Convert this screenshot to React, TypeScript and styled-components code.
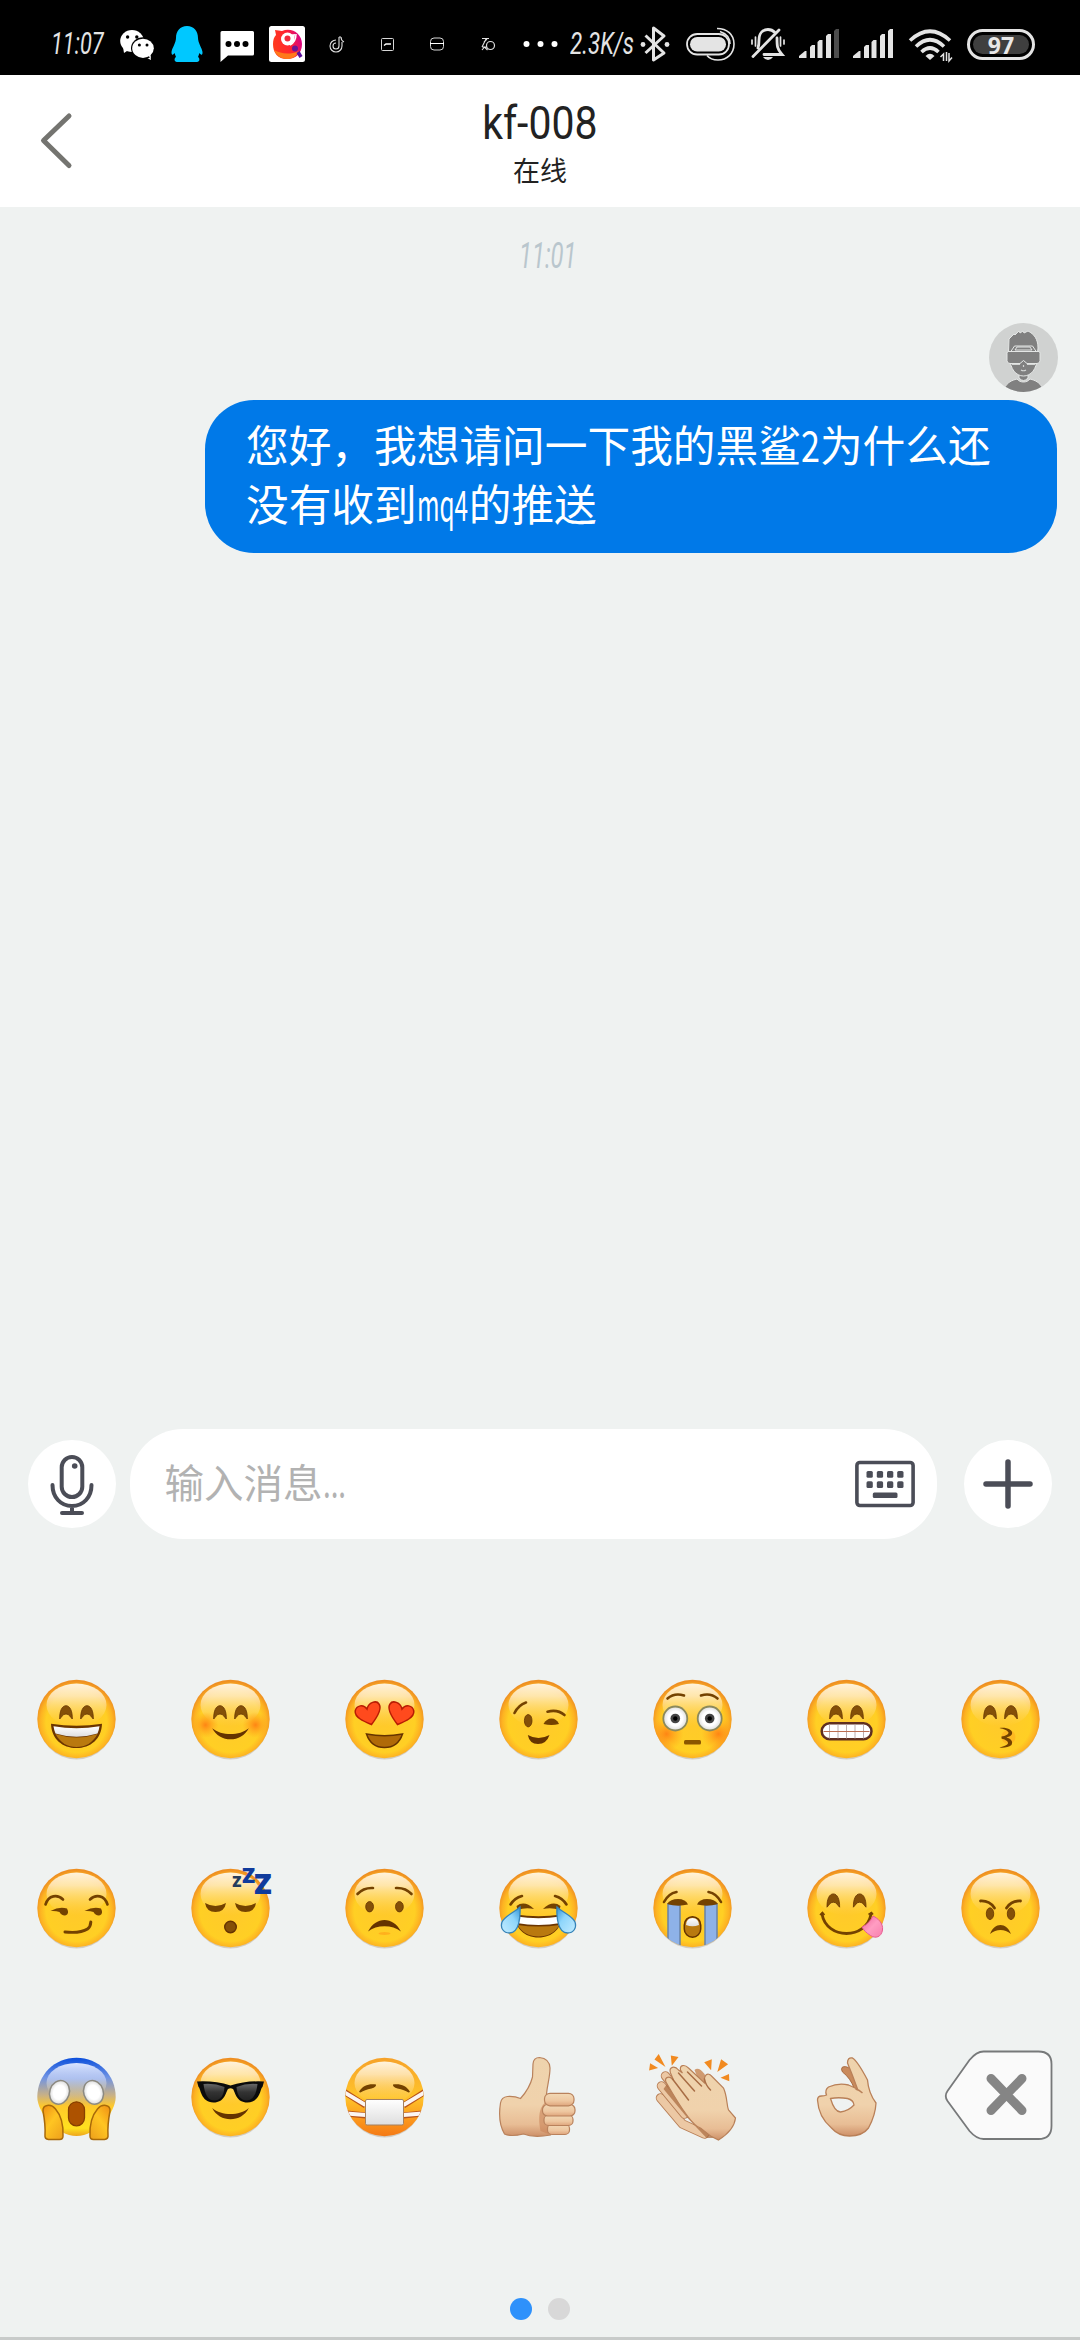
import React from 'react';
import styled, { createGlobalStyle } from 'styled-components';

const GlobalStyle = createGlobalStyle`
  * {
    box-sizing: border-box;
  }

  body {
    margin: 0;
    background: #eff2f1;
    font-family: 'Noto Sans CJK SC', sans-serif;
  }

  svg {
    display: block;
    flex-shrink: 0;
  }
`;

const Screen = styled.div`
  width: 1080px;
  height: 2340px;
  display: flex;
  flex-direction: column;
  background: #eff2f1;
  border-bottom: 3px solid #c8cbca;
  overflow: hidden;
`;

const StatusBar = styled.div`
  height: 75px;
  flex-shrink: 0;
  display: flex;
  align-items: center;
  background: #000;
  color: #e4e4e4;
`;

const StatusText = styled.span<{ $width: number; $scale: number; $indent: number }>`
  width: ${({ $width }) => $width}px;
  height: 75px;
  padding-top: 9px;
  padding-left: ${({ $indent }) => $indent}px;
  flex-shrink: 0;
  white-space: nowrap;
  font: italic 400 32px/68px Roboto, sans-serif;

  span {
    display: inline-block;
    transform: scaleX(${({ $scale }) => $scale});
    transform-origin: left center;
  }
`;

const Battery = styled.div`
  width: 68px;
  height: 31px;
  margin-top: 13px;
  margin-left: 14px;
  padding: 3px;
  border: 3px solid #e4e4e4;
  border-radius: 16px;
`;

const BatteryLevel = styled.div`
  height: 19px;
  border-radius: 10px;
  background: #3f3f3f;
  color: #e8e8e8;
  text-align: center;
  font: 700 23px/20px 'Open Sans', sans-serif;
`;

const Header = styled.header`
  height: 132px;
  flex-shrink: 0;
  display: grid;
  grid-template-columns: 110px 1fr 110px;
  background: #fff;
`;

const TitleBlock = styled.div`
  display: flex;
  flex-direction: column;
  align-items: center;
  color: #222;
`;

const Title = styled.h1`
  margin: 20px 0 0;
  font: 400 46px/56px Roboto, sans-serif;
  transform: scaleX(0.89);
`;

const Subtitle = styled.div`
  margin-top: 3px;
  font-size: 27px;
  line-height: 32px;
`;

const Conversation = styled.main`
  height: 1222px;
  flex-shrink: 0;
  padding: 28px 22px 0 205px;
  display: flex;
  flex-direction: column;
  align-items: flex-end;
`;

const Timestamp = styled.div`
  width: 60px;
  margin-right: 479px;
  color: #b9c6cd;
  font: italic 400 36px/42px Roboto, sans-serif;
  transform: scaleX(0.66);
  transform-origin: left center;
`;

const AvatarIcon = styled.svg`
  margin-top: 46px;
`;

const Bubble = styled.div`
  width: 852px;
  height: 153px;
  margin-top: 8px;
  margin-right: 1px;
  padding: 14px 40px 0 41px;
  border-radius: 49px;
  background: #0079e8;
  color: #fff;
  font-size: 42.7px;
  line-height: 59px;
  white-space: nowrap;
`;

const Narrow = styled.span<{ $width: number; $scale: number }>`
  display: inline-block;
  width: ${({ $width }) => $width}px;
  transform: scaleX(${({ $scale }) => $scale});
  transform-origin: left center;
`;

const Composer = styled.div`
  height: 110px;
  flex-shrink: 0;
  display: flex;
  align-items: center;
  padding: 0 28px;
  justify-content: space-between;
`;

const RoundButton = styled.button`
  width: 88px;
  height: 88px;
  padding: 0;
  border: none;
  border-radius: 50%;
  background: #fff;
`;

const InputBox = styled.div`
  width: 807px;
  height: 110px;
  margin-right: 14px;
  padding: 0 22px 0 35px;
  display: flex;
  align-items: center;
  justify-content: space-between;
  border-radius: 53px;
  background: #fff;
`;

const Placeholder = styled.span`
  margin-bottom: 7px;
  color: #b2b2b2;
  font-size: 39.5px;
  line-height: 60px;
`;

const EmojiGrid = styled.div`
  margin-top: 85px;
  display: grid;
  flex-shrink: 0;
  grid-template-columns: repeat(7, 154px);
  grid-auto-rows: 189px;
  place-items: center;
`;

const Pager = styled.div`
  margin-top: 107px;
  display: flex;
  justify-content: center;
  gap: 16px;
`;

const PageDot = styled.span<{ $active?: boolean }>`
  width: 22px;
  height: 22px;
  border-radius: 50%;
  background: ${({ $active }) => ($active ? '#2e91fb' : '#d8d8d8')};
`;

// Status icons share one coordinate system, so each slot only says where it starts and how wide it is
const Slot: React.FC<{ x: number; w: number; children?: React.ReactNode }> = ({ x, w, children }) => (
  <svg width={w} height="75" viewBox={`${x} 0 ${w} 75`} fill="none">
    {children}
  </svg>
);

const Signal: React.FC<{ x: number; weak?: boolean }> = ({ x, weak }) => (
  <g fill="#e4e4e4">
    <path d={`M${x} 58v-2l6-5h1.5v7z`} />
    <path d={`M${x + 11} 58V47l2-2h3v13z`} />
    <path d={`M${x + 18.5} 58V42l2-2h3v18z`} />
    <path d={`M${x + 27} 58V36l2-2h3v24z`} />
    <path d={`M${x + 35} 58V31l2-2h3v29z`} fill={weak ? '#4d4d4d' : '#e4e4e4'} />
  </g>
);

const StatusIcons: React.FC = () => (
  <StatusBar>
    <StatusText $width={112} $indent={51} $scale={0.68}>
      <span>11:07</span>
    </StatusText>
    <Slot x={112} w={51}>
      <path d="M123 47l1 6 6-4zM150 54l1 6-6-3z" fill="#fff" />
      <ellipse cx="132" cy="41" rx="11.8" ry="11" fill="#fff" />
      <ellipse cx="143" cy="48.3" rx="12" ry="11" fill="#000" />
      <ellipse cx="143" cy="48.3" rx="10.8" ry="9.6" fill="#fff" />
      <path d="M147 55l4 3-1-6z" fill="#fff" />
      <g fill="#000">
        <circle cx="127.6" cy="37" r="1.7" />
        <circle cx="136.8" cy="37" r="1.7" />
        <circle cx="139.4" cy="45" r="1.5" />
        <circle cx="147" cy="45" r="1.5" />
      </g>
    </Slot>
    <Slot x={163} w={48}>
      <path
        d="M187 26c7 0 11 5 11 12 0 5 4 10 4.500 14 .2 3-1 4-3 1l-1.500 4c2 1 2 5-1 5h-20c-3 0-3-4-1-5l-1.500-4c-2 3-3 2-3-1 .5-4 4.500-9 4.500-14 0-7 4-12 11-12z"
        fill="#00c8ff"
      />
    </Slot>
    <Slot x={211} w={50}>
      <path d="M222 31h30.500q1.500 0 1.500 1.500v21.500q0 1.500-1.500 1.500H228l-7.500 6.500V32.500q0-1.500 1.500-1.500z" fill="#fff" />
      <g fill="#000">
        <circle cx="228.500" cy="44" r="3" />
        <circle cx="237" cy="44" r="3" />
        <circle cx="245.500" cy="44" r="3" />
      </g>
    </Slot>
    <Slot x={261} w={60}>
      <defs>
        <linearGradient id="bird" x1="0" y1="0.600" x2="1" y2="0.300">
          <stop offset="0" stopColor="#ff3b1c" />
          <stop offset="0.550" stopColor="#ff2430" />
          <stop offset="1" stopColor="#d4008c" />
        </linearGradient>
      </defs>
      <rect x="269" y="26" width="36" height="36" rx="2.500" fill="#fff" />
      <path d="M275 30l7 1c10-4 20 3 20 13 0 9-6 15-15 15s-14-6-14-15c0-4 1-7 3-9z" fill="url(#bird)" />
      <path d="M274 50c7 4 16 5 25 1-3 6-7 8-12 8-6 0-11-4-13-9z" fill="#ff7a1a" />
      <circle cx="287.500" cy="39" r="6.500" fill="#fff" />
      <path d="M287 35l8-1-1 8z" fill="#fff" />
      <circle cx="287.500" cy="38.500" r="3" fill="#f22a3c" />
      <path d="M296 34c0 6-2 9-6 11" stroke="#fff" strokeWidth="1.500" />
      <circle cx="295" cy="48.500" r="3" fill="#6b1596" />
      <path d="M298 52l3 5" stroke="#5a0f9c" strokeWidth="3.500" />
    </Slot>
    <Slot x={321} w={48}>
      <path
        d="M339 37v9a3 3 0 1 1-3-3M341 37c0 3 1 4 3 5M336 40a6 6 0 1 0 6 6v-4M339 37h2"
        stroke="#e0e0e0"
        strokeWidth="1.100"
      />
    </Slot>
    <Slot x={369} w={48}>
      <rect x="381.500" y="38.500" width="12" height="12" rx="1" stroke="#d8d8d8" />
      <path d="M384 45.500l2-1.500h5" stroke="#fff" strokeWidth="1.500" />
    </Slot>
    <Slot x={417} w={50}>
      <rect x="430.500" y="38" width="13" height="12" rx="3.500" stroke="#d8d8d8" />
      <path d="M430 43.500h14" stroke="#fff" />
    </Slot>
    <Slot x={467} w={48}>
      <path d="M482 38.500h7M486 39l-4 8M484 42l3-3M482 50l2.500-3 3 3M482 47h5" stroke="#e0e0e0" strokeWidth="1.100" />
      <circle cx="490.500" cy="45.500" r="4" stroke="#e0e0e0" strokeWidth="1.200" />
    </Slot>
    <Slot x={515} w={53}>
      <circle cx="526.500" cy="44" r="3" fill="#fff" />
      <circle cx="540.500" cy="44" r="3" fill="#fff" />
      <circle cx="554.500" cy="44" r="3" fill="#fff" />
    </Slot>
    <StatusText $width={68} $indent={2} $scale={0.7}>
      <span>2.3K/s</span>
    </StatusText>
    <Slot x={636} w={42}>
      <path d="M645.500 35.500L664 53l-10.500 7V28L664 36 645.500 53" stroke="#e4e4e4" strokeWidth="3" strokeLinejoin="round" />
      <circle cx="643" cy="44.500" r="2.400" fill="#e4e4e4" />
      <circle cx="667" cy="44.500" r="2.400" fill="#e4e4e4" />
    </Slot>
    <Slot x={678} w={65}>
      <rect x="687" y="34" width="42" height="20.500" rx="10.200" stroke="#e4e4e4" strokeWidth="1.800" />
      <rect x="690" y="37" width="36" height="14.500" rx="7.200" fill="#e4e4e4" />
      <path d="M717 28.500c10 0 17 6 17 15.500s-7 16-16 16c-5 0-9-2-11-4.500M720 31.500c6 2 10 6 10 12.500" stroke="#e4e4e4" strokeWidth="1.600" />
    </Slot>
    <Slot x={743} w={49}>
      <g stroke="#e4e4e4" strokeWidth="2.800" strokeLinecap="round">
        <path d="M758 48c1-3 1-5 1-8 0-7 4-10.500 9-10.500 3 0 5 1 7 3M777 38c0 8 0 11 5 16.500h-18" />
        <path d="M753 56.500L779 30" />
        <path d="M755.500 37v9M752 40v4M780.500 37v9M784 40v4" strokeWidth="1.700" />
      </g>
      <path d="M763 57h10q-2 3-5 3t-5-3z" fill="#e4e4e4" />
    </Slot>
    <Slot x={792} w={54}>
      <Signal x={799} weak />
    </Slot>
    <Slot x={846} w={54}>
      <Signal x={853} />
    </Slot>
    <Slot x={900} w={53}>
      <g stroke="#e4e4e4" strokeWidth="3.600">
        <path d="M910 40.500Q930 22 950 40.500" />
        <path d="M916 46.500Q930 33 944 46.500" />
        <path d="M921.500 52Q930 44 938.500 52" />
      </g>
      <path d="M925.500 56q4.500-4.500 9 0L930 60z" fill="#e4e4e4" />
      <path d="M943.500 61v-7l-3 3M946.500 52v9M949 53v8l3-3.500" stroke="#e4e4e4" strokeWidth="1.500" />
    </Slot>
    <Battery>
      <BatteryLevel>97</BatteryLevel>
    </Battery>
  </StatusBar>
);

const Avatar: React.FC = () => (
  <AvatarIcon width="69" height="69" viewBox="989 323 69 69">
    <clipPath id="avatarClip">
      <circle cx="1023.500" cy="357.500" r="34.500" />
    </clipPath>
    <g clipPath="url(#avatarClip)">
      <rect x="989" y="323" width="69" height="69" fill="#d0d2d1" />
      <g fill="#808080" stroke="#e4e6e5" strokeWidth="1">
        <path d="M1003 394c1-8 5-13 14-15 3 4 10 4 13 0 9 2 13 7 14 15z" />
        <path d="M1019 372v6q4.500 5 9 0v-6z" />
        <path d="M1010 358c0 11 6 18 13.500 18s13.500-7 13.500-18z" />
        <path d="M1008.500 352l.5-13 3-3 2-2 1 1 4-4 1 2 3-2 1 2 4-2c6 3 10 8 10 17l-.5 5z" />
        <path d="M1010.500 352l4-6h18l4 6" />
        <path d="M1015 350l2-3h13l2 3z" />
        <path d="M1008 351.500h31q1 0 1 2v7q0 3-3 3h-10l-3.500-3-3.500 3h-10q-3 0-3-3v-7q0-2 1-2z" />
      </g>
      <path d="M1012 364.500h8M1027 364.500h8M1021 370q2.500 1.500 5 0M1023.500 365v2" stroke="#d4d6d5" strokeWidth="1.200" fill="none" />
    </g>
  </AvatarIcon>
);

const BROWN = '#845008';
const DARK = '#653300';

const Face: React.FC<{ fill?: string; children?: React.ReactNode }> = ({ fill = 'url(#face)', children }) => (
  <>
    <ellipse cx="0" cy="1.200" rx="38.500" ry="39.300" fill="#9a8a70" opacity="0.350" />
    <circle r="39.200" fill={fill} />
    <ellipse cx="0" cy="-14" rx="30" ry="21.500" fill="url(#gloss)" />
    {children}
  </>
);

const HappyEyes: React.FC<{ gap?: number; dy?: number }> = ({ gap = 10.5, dy = 0 }) => (
  <>
    {[-gap, gap].map((x) => (
      <path
        key={x}
        transform={`translate(${x} ${dy})`}
        d="M-6.300 0C-6.500-8-4-13.300 0-13.300S6.500-8 6.300 0C4.500-1.500 3.500-5 0-5S-4.500-1.500-6.300 0z"
        fill={BROWN}
        stroke={DARK}
        strokeWidth="0.800"
      />
    ))}
  </>
);

// Draws its children twice, the second time mirrored across the face
const Both: React.FC<{ children: React.ReactNode }> = ({ children }) => (
  <>
    <g>{children}</g>
    <g transform="scale(-1 1)">{children}</g>
  </>
);

const Line: React.FC<{ d: string; w?: number }> = ({ d, w = 2.6 }) => (
  <path d={d} fill="none" stroke="#744200" strokeWidth={w} strokeLinecap="round" />
);

const emojis: { name: string; art: React.ReactNode }[] = [
  {
    name: 'smile',
    art: (
      <Face>
        <HappyEyes />
        <path d="M-25.500 4.700Q0 9 25.500 4.700C25 20 14 29 0 29S-25 20-25.500 4.700z" fill="#6b3500" />
        <path d="M-21 15Q0 22 21 15C16 24 9 28 0 28S-16 24-21 15z" fill="#b9790f" />
        <path d="M-23 7.200Q0 11.500 23 7.200 22.500 11 21 14.500 0 21-21 14.500-22.500 11-23 7.200z" fill="url(#teeth)" />
      </Face>
    ),
  },
  {
    name: 'blush',
    art: (
      <Face>
        <Both>
          <circle cx="-25" cy="6" r="13" fill="url(#cheek)" />
        </Both>
        <HappyEyes />
        <path d="M-18.300 9.200C-9 17 9 17 18.300 9.200 11 24-11 24-18.300 9.200z" fill={DARK} />
      </Face>
    ),
  },
  {
    name: 'heart eyes',
    art: (
      <Face>
        <Both>
          <path
            d="M-13 5.500C-19 3-30-1-29.300-8-28-14-21-15-17.500-10-16-17-8-19-5.500-15-2-10-8-1-13 5.500z"
            fill="#ff4a1d"
            stroke="#b81c04"
            strokeWidth="1.500"
          />
        </Both>
        <path d="M-18 15Q0 18.500 18 15C15 24 9 28.500 0 28.500S-15 24-18 15z" fill="#b06a08" stroke={DARK} strokeWidth="1.500" />
      </Face>
    ),
  },
  {
    name: 'wink',
    art: (
      <Face>
        <Line d="M-24-6Q-20-14-12.500-16.500" />
        <ellipse cx="-10.300" cy="1.700" rx="3.800" ry="6.200" fill={BROWN} stroke={DARK} strokeWidth="0.800" />
        <Line d="M9-7.300Q19-10 26-4" />
        <path d="M5 5Q8-.5 13-.5T20.500 5Q13 7 5 5z" fill="#744200" />
        <path d="M-10.700 16Q0 22 11 16 8 25-.5 25T-10.700 16z" fill={DARK} />
      </Face>
    ),
  },
  {
    name: 'flushed',
    art: (
      <Face>
        <Both>
          <circle cx="-26" cy="15" r="17" fill="url(#cheek)" clipPath="url(#faceClip)" />
          <Line d="M-25-20.500Q-18-26.500-8.500-23.500" />
          <circle cx="-17.200" cy="-0.500" r="12" fill="url(#eyeball)" stroke="#8b895c" strokeWidth="1.800" />
          <circle cx="-17.200" cy="-0.500" r="4.800" fill="#444" />
          <circle cx="-17.200" cy="-0.500" r="2.200" fill="#000" />
        </Both>
        <rect x="-8.500" y="21" width="17" height="4.500" rx="1.500" fill="#8b5500" />
      </Face>
    ),
  },
  {
    name: 'grimace',
    art: (
      <Face>
        <HappyEyes />
        <rect x="-24.800" y="4.300" width="49.800" height="16" rx="8" fill="#fff" stroke="#5f2f20" strokeWidth="2.500" />
        <path d="M-17 5.500v14M-8.500 5.500v14M0 5.500v14M8.500 5.500v14M17 5.500v14" stroke="#b3a5a5" strokeWidth="0.900" />
        <path d="M-23 12.500h46" stroke="#bd7052" strokeWidth="1.200" />
      </Face>
    ),
  },
  {
    name: 'kissing',
    art: (
      <Face>
        <HappyEyes />
        <circle cx="8" cy="18" r="7" fill="#ff9a1c" opacity="0.400" />
        <path
          d="M-1 9C6 8 13 11 11.500 15 10.500 17.500 7 18 6 18.500 10 19.500 13 22 11 26 8 28.500 3 29-1 28.500 4 27 7 26 7.500 24.500 8 22 4 20.500 1 19.500L1 17.500C5 17 8 15.500 8 13.500 7 11 3 10-1 9z"
          fill="#744200"
        />
      </Face>
    ),
  },
  {
    name: 'smirk',
    art: (
      <Face>
        <Both>
          <Line d="M-31-3.500C-28-13-19-14-13.500-8.500" />
        </Both>
        {[0, 34].map((x) => (
          <path
            key={x}
            transform={`translate(${x} 0)`}
            d="M-26 3Q-17-2-9.500 .5-7 5.500-10.500 7.300-15 8-17 4-21 2.500-26 3z"
            fill="#744200"
          />
        ))}
        <Line w={3} d="M-11.500 24Q4 25.500 11 21 14 19 14.300 14" />
      </Face>
    ),
  },
  {
    name: 'sleeping',
    art: (
      <Face>
        <Both>
          <path d="M-25.500-5Q-15 1-4.500-5-6 4-15 4T-25.500-5z" fill="#744200" />
        </Both>
        <circle cx="0" cy="19" r="5.800" fill={BROWN} stroke={DARK} strokeWidth="1.400" />
        <g fill="#103b9c" fontFamily="Open Sans, sans-serif" fontWeight="800">
          <text x="1.800" y="-21" fontSize="15" fill="#253c5c">
            Z
          </text>
          <text x="11.500" y="-25.500" fontSize="21.500">
            Z
          </text>
          <text x="23.500" y="-14" fontSize="29">
            Z
          </text>
        </g>
      </Face>
    ),
  },
  {
    name: 'worried',
    art: (
      <Face>
        <Both>
          <Line d="M-27-14Q-21-20.500-11.500-20" />
          <ellipse cx="-14.900" cy="-1.300" rx="3.900" ry="5.200" fill={BROWN} stroke={DARK} strokeWidth="0.800" />
        </Both>
        <path d="M-16.500 23.500C-9 8 9 8 16.500 23.500 8 16.500-8 16.500-16.500 23.500z" fill={DARK} />
        <ellipse cx="0" cy="25.500" rx="6" ry="1.500" fill="#ffb01d" />
      </Face>
    ),
  },
  {
    name: 'joy',
    art: (
      <Face>
        <Both>
          <Line d="M-28-3.500Q-24-10-16.500-12" />
          <path d="M-22-2Q-14-8-4.500 1-13-1-21 2z" fill="#744200" />
        </Both>
        <path d="M-23 6.500Q0 10 23 6.500C24 20 14 29.500 0 29.500S-24 20-23 6.500z" fill="#6b3500" />
        <path d="M-21 17Q0 20 21 17C16 25 9 28.500 0 28.500S-16 25-21 17z" fill="#b9790f" />
        <path d="M-22 8.500Q0 12 22 8.500V15Q0 19-22 15z" fill="#fff" />
        <Both>
          <path
            d="M-18.500-1C-18 8-19 25-29 25-35 25-38.500 20-36.500 14-34 8-25 5-18.500-1z"
            fill="url(#tear)"
            stroke="#3583b8"
            strokeWidth="1.300"
          />
        </Both>
      </Face>
    ),
  },
  {
    name: 'sob',
    art: (
      <Face>
        <Both>
          <Line d="M-28.500-6Q-24-14.500-16-16" />
          <rect x="-24.500" y="-4" width="12" height="45" fill="#8eb2e8" stroke="#6882a5" strokeWidth="1.500" clipPath="url(#faceClip)" />
          <path d="M-25.500-4Q-22-9-14.500-9T-4.500-3.500Q-15-1-25.500-4z" fill="#744200" />
        </Both>
        <rect x="-8.200" y="8.700" width="16.400" height="20.500" rx="8.200" fill="#b9790f" stroke={DARK} strokeWidth="1.500" />
        <path d="M-6.500 17Q-6 10 0 10T6.500 17Q0 19.500-6.500 17z" fill="url(#teeth)" />
      </Face>
    ),
  },
  {
    name: 'yum',
    art: (
      <Face>
        <HappyEyes gap={13.2} dy={-0.8} />
        <Line w={2.8} d="M-24.500 6C-20 32 20 32 24.500 6" />
        <path d="M-26.500 7l2.500-2.500 2 2.500M22 6.500l3-2 1.500 2" stroke="#744200" strokeWidth="1.600" fill="none" />
        <path
          d="M26.500 8C31 10 37 15 36 22 35 29 29 31 24 27.500 20 25 17 22 15.500 19 20 17 24 13 26.500 8z"
          fill="url(#tongue)"
          stroke="#e85d91"
          strokeWidth="1"
        />
      </Face>
    ),
  },
  {
    name: 'angry',
    art: (
      <Face>
        <Both>
          <Line w={2.8} d="M-20-7Q-11-7.500-6 0" />
          <ellipse cx="-10.500" cy="5.700" rx="3.700" ry="5.900" fill={BROWN} stroke={DARK} strokeWidth="0.800" />
        </Both>
        <path d="M-10.500 26C-6 14 6 14 10.500 26 4 20.500-4 20.500-10.500 26z" fill="#744200" />
      </Face>
    ),
  },
  {
    name: 'scream',
    art: (
      <>
        <path d="M0-39.200C22-39.200 39.200-22 39.200 0 39.200 15 20 39 0 39S-39.200 15-39.200 0C-39.200-22-22-39.200 0-39.200z" fill="url(#scream)" />
        <ellipse cx="0" cy="-14" rx="30" ry="20" fill="url(#blueGloss)" />
        <Both>
          <ellipse
            cx="-17"
            cy="-4.700"
            rx="9.800"
            ry="12"
            transform="rotate(18 -17 -4.700)"
            fill="url(#eyeball)"
            stroke="#8b8980"
            strokeWidth="1.500"
          />
          <path
            d="M-33.500 14C-34 8-26 6-21 12-15 19-13 28-13.500 39Q-13.500 42.500-17 42.500H-28Q-32 42-31.500 38C-31 30-32 22-33.500 14z"
            fill="url(#hand)"
            stroke="#a8690a"
            strokeWidth="1.500"
          />
        </Both>
        <rect x="-8" y="4.800" width="16" height="24" rx="8" fill="#ad5200" stroke="#874000" strokeWidth="1.300" />
      </>
    ),
  },
  {
    name: 'cool',
    art: (
      <Face>
        <path
          d="M-33.500-15.500Q-16-16.500 0-11.500 16-16.500 33.500-15.500L32-10C30-10 30 5.500 17 5.500 6 5.500 5-4 2.500-8Q0-9.500-2.500-8C-5-4-6 5.500-17 5.500-30 5.500-30-10-32-10z"
          fill="#0b0b0b"
        />
        <Both>
          <path d="M-27-13Q-16-14-6-10 -7 3-16 3.500T-27-13z" fill="url(#lens)" />
        </Both>
        <path d="M-18.300 11C-9 19 9 19 18.300 11 11 26-11 26-18.300 11z" fill={DARK} />
      </Face>
    ),
  },
  {
    name: 'mask',
    art: (
      <Face fill="url(#sickFace)">
        <Both>
          <path d="M-25.500-5C-22-12-15-13.500-8.500-12.500Q-8-10-13-8.500C-18-8-21-6-24-4.500z" fill="#744200" />
          <g clipPath="url(#faceClip)" fill="none">
            <path d="M-40-5L-19 8.500M-38 16.500L-19 18.500" stroke="#b9541a" strokeWidth="6" />
            <path d="M-40-4.500L-19 8M-38 16.500L-19 18" stroke="#fbf5f2" strokeWidth="3.800" />
          </g>
        </Both>
        <rect x="-19" y="2.500" width="38" height="25.500" rx="1.500" fill="url(#teeth)" stroke="#a5805f" strokeWidth="1" />
      </Face>
    ),
  },
  {
    name: 'thumbs up',
    art: (
      <g stroke="#b9825c" strokeWidth="1.200">
        <path
          d="M-38 6Q-37 0-31-.5-24-1-18 1.500C-13-4-8-12-6-20L-5.500-33Q-5-39.500 1-39.500 11-38.500 11.500-29C11.500-20 9-13 8-3L12 4V38Q-5 41-15 37-28 40-34 37-41 25-38 6z"
          fill="url(#skin)"
        />
        <path d="M6 6Q-2 14 2 34L10 37V2z" fill="#c98458" stroke="none" opacity="0.600" />
        <rect x="9" y="27" width="22" height="10.500" rx="4.500" fill="url(#finger)" />
        <rect x="5.500" y="18" width="29" height="10.500" rx="4.500" fill="url(#finger)" />
        <rect x="4" y="7.500" width="32.500" height="11.500" rx="5" fill="url(#finger)" />
        <rect x="6" y="-3.700" width="29.500" height="12.500" rx="5.500" fill="url(#finger)" />
      </g>
    ),
  },
  {
    name: 'clap',
    art: (
      <>
        <path
          d="M-38-37.500l4.200-5.500 6.800 13zM-21.700-41.500l7.700 1.500-6.700 8.700zM-42.400-33.700l8 4.700-9 2.500zM11.700-34.700l7.600-3-.7 11zM28.600-37.700l7 5-10.800 7.700zM28-19.300l8.500-3.700.3 7.300z"
          fill="#f18a20"
        />
        {['M-32 1L-10 27 12 37', 'M-31-11L-8 17', 'M-27-21L0 12'].map((d) => (
          <g key={d} fill="none" strokeLinecap="round" strokeLinejoin="round">
            <path d={d} stroke="#b98058" strokeWidth="9.500" />
            <path d={d} stroke="#ecc8a4" strokeWidth="7.500" />
          </g>
        ))}
        <path d="M-29-8L-5 21 14 41 22 41 0 8-24-15z" fill="#a8683c" opacity="0.700" />
        <path d="M2-27Q6-31 12-23L18-10 8-12z" fill="#cf9a70" />
        <path
          d="M-26-14C-29-19-24-22-20-18L-19-17-22-24C-24-30-18-32-14-27L-10-24-12-27C-13-32-8-33-4-29L12-14C11-22 15-26 20-20L31-9C35 0 34 8 36 13L43 21C42 30 34 38 26 43L18 39 8 31C2 30-10 14-26-14z"
          fill="url(#skin)"
          stroke="#b98058"
          strokeWidth="1.200"
        />
        <path d="M-20-18L-4 3M-14-24L2-6M-5-25L9-11M12-18Q13-12 18-7" stroke="#a86d45" strokeWidth="1.500" fill="none" strokeLinecap="round" />
      </>
    ),
  },
  {
    name: 'ok hand',
    art: (
      <>
        <path d="M-4-30Q2-32 7-24L13-8 8-8Q4-19-4-25-6-28-4-30z" fill="#c98a5c" stroke="#a96c42" />
        <path
          fillRule="evenodd"
          d="M-29 3Q-29-1-25-1-22-1-20-2-22-7-18-10-8-14.500 2-12L11-8Q6-22 1-34 1-40 6-39 11-36 21-17 22-4 29.500 6 29 18 22 31 16 39 3 39-8 39-15 31-28 20-29 3zM-16 1.500Q-12 15-6 15 2 14 7.500 8 7 3 1 1.500-8 0-16 1.500z"
          fill="url(#skin)"
          stroke="#b98058"
          strokeWidth="1.300"
        />
        <path d="M9-8Q13-7 16-4" stroke="#b98058" strokeWidth="1.300" fill="none" />
      </>
    ),
  },
];

const GradientDefs: React.FC = () => (
  <svg width="0" height="0">
    <defs>
      <clipPath id="faceClip">
        <circle r="39.200" />
      </clipPath>
      <radialGradient id="face" gradientUnits="userSpaceOnUse" cx="0" cy="3" r="41">
        <stop offset="0" stopColor="#ffc92b" />
        <stop offset="0.740" stopColor="#ffcf24" />
        <stop offset="0.880" stopColor="#fdb322" />
        <stop offset="1" stopColor="#ee8f22" />
      </radialGradient>
      <linearGradient id="sickFace" x1="0" y1="0" x2="0" y2="1">
        <stop offset="0" stopColor="#f6a229" />
        <stop offset="0.500" stopColor="#ffc42a" />
        <stop offset="0.800" stopColor="#fb961c" />
        <stop offset="1" stopColor="#f47a16" />
      </linearGradient>
      <linearGradient id="gloss" x1="0" y1="0" x2="0" y2="1">
        <stop offset="0" stopColor="#fff3dc" />
        <stop offset="0.300" stopColor="#ffeac2" stopOpacity="0.850" />
        <stop offset="1" stopColor="#ffd35a" stopOpacity="0" />
      </linearGradient>
      <linearGradient id="blueGloss" x1="0" y1="0" x2="0" y2="1">
        <stop offset="0" stopColor="#dbe5ff" />
        <stop offset="0.400" stopColor="#bccbf2" stopOpacity="0.800" />
        <stop offset="1" stopColor="#ffd35a" stopOpacity="0" />
      </linearGradient>
      <radialGradient id="cheek">
        <stop offset="0" stopColor="#ff7d12" stopOpacity="0.900" />
        <stop offset="1" stopColor="#ff9a1c" stopOpacity="0" />
      </radialGradient>
      <linearGradient id="teeth" x1="0" y1="0" x2="0" y2="1">
        <stop offset="0" stopColor="#fff" />
        <stop offset="1" stopColor="#dedede" />
      </linearGradient>
      <radialGradient id="eyeball">
        <stop offset="0.600" stopColor="#fff" />
        <stop offset="1" stopColor="#dcdcdc" />
      </radialGradient>
      <linearGradient id="tear" x1="1" y1="0" x2="0" y2="1">
        <stop offset="0" stopColor="#2f92d6" />
        <stop offset="0.400" stopColor="#8fd6fb" />
        <stop offset="1" stopColor="#c3ecff" />
      </linearGradient>
      <linearGradient id="tongue" x1="0" y1="0" x2="1" y2="1">
        <stop offset="0" stopColor="#f0609a" />
        <stop offset="0.500" stopColor="#ff9dc2" />
        <stop offset="1" stopColor="#f77fae" />
      </linearGradient>
      <linearGradient id="scream" x1="0" y1="0" x2="0" y2="1">
        <stop offset="0" stopColor="#0b4fdc" />
        <stop offset="0.250" stopColor="#6f93e4" />
        <stop offset="0.480" stopColor="#c9b185" />
        <stop offset="0.620" stopColor="#ffc92a" />
        <stop offset="0.900" stopColor="#ffe11f" />
        <stop offset="1" stopColor="#eda51d" />
      </linearGradient>
      <linearGradient id="hand" x1="0" y1="0" x2="0.800" y2="1">
        <stop offset="0" stopColor="#ef8d14" />
        <stop offset="0.500" stopColor="#ffc522" />
        <stop offset="1" stopColor="#f0a51c" />
      </linearGradient>
      <linearGradient id="lens" x1="0" y1="0" x2="0" y2="1">
        <stop offset="0" stopColor="#686868" />
        <stop offset="0.500" stopColor="#333" />
        <stop offset="1" stopColor="#222" />
      </linearGradient>
      <linearGradient id="skin" x1="0" y1="0" x2="0" y2="1">
        <stop offset="0" stopColor="#eed3ad" />
        <stop offset="0.600" stopColor="#f0d2ac" />
        <stop offset="0.850" stopColor="#e8bd95" />
        <stop offset="1" stopColor="#cd9068" />
      </linearGradient>
      <linearGradient id="finger" x1="0" y1="0" x2="0" y2="1">
        <stop offset="0" stopColor="#f2d9b6" />
        <stop offset="0.600" stopColor="#eec7a0" />
        <stop offset="1" stopColor="#dfa57c" />
      </linearGradient>
    </defs>
  </svg>
);

const App: React.FC = () => (
  <>
    <GlobalStyle />
    <GradientDefs />
    <Screen>
      <StatusIcons />
      <Header>
        <svg width="110" height="132" viewBox="0 75 110 132" fill="none">
          <path d="M69 116L43.500 140.500 69 165.500" stroke="#747470" strokeWidth="5" strokeLinecap="round" strokeLinejoin="round" />
        </svg>
        <TitleBlock>
          <Title>kf-008</Title>
          <Subtitle>在线</Subtitle>
        </TitleBlock>
      </Header>

      <Conversation>
        <Timestamp>11:01</Timestamp>
        <Avatar />
        <Bubble>
          您好，我想请问一下我的黑鲨
          <Narrow $width={19} $scale={0.8}>2</Narrow>
          为什么还
          <br />
          没有收到
          <Narrow $width={52} $scale={0.57}>mq4</Narrow>
          的推送
        </Bubble>
      </Conversation>

      <Composer>
        <RoundButton aria-label="语音">
          <svg width="88" height="88" viewBox="28 1440 88 88" fill="none" stroke="#4b4d57" strokeWidth="4" strokeLinecap="round">
            <rect x="61.700" y="1457" width="20.600" height="40" rx="10.300" />
            <path d="M52.500 1485c0 12 8 21 19.500 21s19.500-9 19.500-21M72 1506v6.500M62 1513h20" />
            <circle cx="74.700" cy="1466" r="2.800" fill="#4b4d57" stroke="none" />
          </svg>
        </RoundButton>
        <InputBox>
          <Placeholder>
            输入消息
            <Narrow $width={22} $scale={0.7}>...</Narrow>
          </Placeholder>
          <svg width="60" height="48" viewBox="0 0 60 48" fill="#4b4d57">
            <rect x="1.900" y="2.500" width="56.200" height="43" rx="3" fill="none" stroke="#4b4d57" strokeWidth="3.600" />
            {[11.5, 21.8, 32, 42.2].map((x) => (
              <React.Fragment key={x}>
                <rect x={x} y="11" width="6.300" height="6.800" rx="1.500" />
                <rect x={x} y="21.300" width="6.300" height="6.800" rx="1.500" />
              </React.Fragment>
            ))}
            <rect x="17.800" y="32.500" width="24.700" height="5.500" rx="1.500" />
          </svg>
        </InputBox>
        <RoundButton aria-label="更多">
          <svg width="88" height="88" viewBox="0 0 88 88" stroke="#4b4d57" strokeWidth="5.500" strokeLinecap="round">
            <path d="M44 22v44M22 44h44" />
          </svg>
        </RoundButton>
      </Composer>

      <EmojiGrid>
        {emojis.map(({ name, art }) => (
          <svg key={name} width="96" height="96" viewBox="-47.500 -48 96 96">
            {art}
          </svg>
        ))}
        <svg width="116" height="96" viewBox="-57.500 -48 116 96">
          <path
            d="M-17-45.500H38Q51-45.500 51-33V29Q51 42 38 42H-17Q-24 42-31 34L-53 4Q-56.500-1-53-6L-31-37Q-24-45.500-17-45.500z"
            fill="#fafafa"
            stroke="#77797a"
            strokeWidth="1.800"
          />
          <path d="M-9.500-18.500L21.500 13.500M21.500-18.500L-9.500 13.500" stroke="#858585" strokeWidth="9" strokeLinecap="round" />
        </svg>
      </EmojiGrid>

      <Pager>
        <PageDot $active />
        <PageDot />
      </Pager>
    </Screen>
  </>
);

export default App;
